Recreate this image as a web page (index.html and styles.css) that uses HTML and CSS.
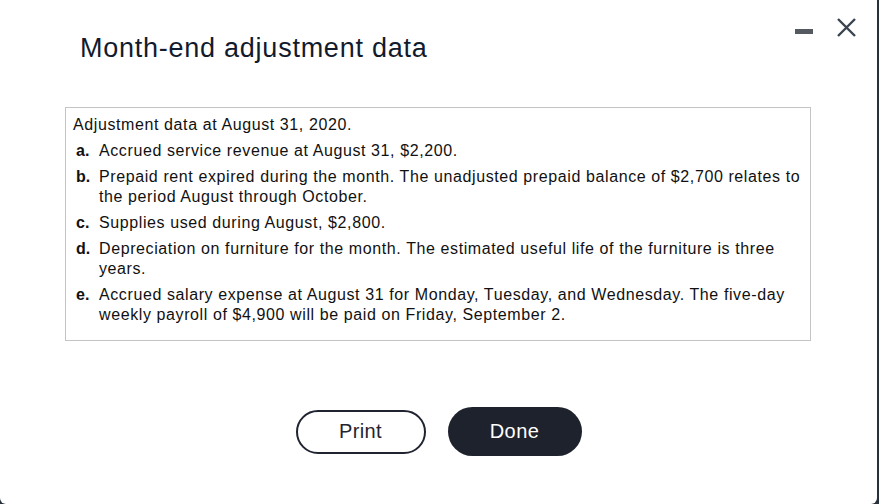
FILE: index.html
```html
<!DOCTYPE html>
<html lang="en">
<head>
<meta charset="utf-8">
<title>Month-end adjustment data</title>
<link rel="stylesheet" href="styles.css">
</head>
<body>
<div class="backdrop">
  <div class="dialog">
    <div class="header">
      <h1 class="title">Month-end adjustment data</h1>
      <div class="controls">
        <span class="minimize"></span>
        <svg class="close" width="19" height="19" viewBox="0 0 19 19" aria-hidden="true">
          <path d="M1 1 L18 18 M18 1 L1 18" stroke="#3a4451" stroke-width="2.4" stroke-linecap="butt" fill="none"/>
        </svg>
      </div>
    </div>
    <div class="databox">
      <p class="intro">Adjustment data at August 31, 2020.</p>
      <div class="item"><span class="lbl">a.</span><span class="txt">Accrued service revenue at August 31, $2,200.</span></div>
      <div class="item"><span class="lbl">b.</span><span class="txt">Prepaid rent expired during the month. The unadjusted prepaid balance of $2,700 relates to the period August through October.</span></div>
      <div class="item"><span class="lbl">c.</span><span class="txt">Supplies used during August, $2,800.</span></div>
      <div class="item"><span class="lbl">d.</span><span class="txt">Depreciation on furniture for the month. The estimated useful life of the furniture is three years.</span></div>
      <div class="item"><span class="lbl">e.</span><span class="txt">Accrued salary expense at August 31 for Monday, Tuesday, and Wednesday. The five-day weekly payroll of $4,900 will be paid on Friday, September 2.</span></div>
    </div>
    <div class="actions">
      <button class="btn btn-print">Print</button>
      <button class="btn btn-done">Done</button>
    </div>
  </div>
</div>
</body>
</html>
```

FILE: styles.css
```css
html, body {
  margin: 0;
  padding: 0;
  background: #ffffff;
  overflow: hidden;
}

body {
  font-family: "Liberation Sans", Arial, Helvetica, sans-serif;
}

.backdrop {
  width: 879px;
  height: 504px;
  background: #27313c;
}

.dialog {
  width: 877px;
  height: 504px;
  background: #ffffff;
  border-radius: 0 0 6px 6px;
  box-sizing: border-box;
}

.header {
  display: flex;
  justify-content: space-between;
  align-items: flex-start;
}

.title {
  margin: 32px 0 0 80px;
  font-size: 27px;
  line-height: 32px;
  font-weight: 400;
  letter-spacing: 0.75px;
  color: #121b2d;
}

.controls {
  display: flex;
  align-items: flex-start;
  gap: 24px;
  margin: 18px 21px 0 0;
}

.minimize {
  display: block;
  width: 18px;
  height: 5px;
  margin-top: 11px;
  background: #555a60;
}

.close {
  display: block;
}

.databox {
  margin: 43px 0 0 65px;
  width: 746px;
  box-sizing: border-box;
  border: 1px solid #c4c4c4;
  padding: 7px 2px 15px 7px;
  font-size: 16px;
  line-height: 20px;
  letter-spacing: 0.6px;
  color: #111111;
}

.intro {
  margin: 0;
}

.item {
  display: flex;
  margin-top: 6px;
  padding-left: 3px;
}

.lbl {
  flex: 0 0 23px;
  font-weight: 700;
  letter-spacing: 0;
}

.txt {
  flex: 1 1 auto;
}

.actions {
  display: flex;
  justify-content: center;
  align-items: center;
  gap: 22px;
  margin-top: 66px;
}

.btn {
  font-family: "Liberation Sans", Arial, Helvetica, sans-serif;
  font-size: 20px;
  letter-spacing: 0.4px;
  border-radius: 30px;
  box-sizing: border-box;
  cursor: pointer;
  padding: 0;
}

.btn-print {
  width: 130px;
  height: 44px;
  background: #ffffff;
  border: 2px solid #1f2430;
  color: #1f2430;
}

.btn-done {
  width: 134px;
  height: 49px;
  background: #1e222d;
  border: none;
  color: #ffffff;
}
```
